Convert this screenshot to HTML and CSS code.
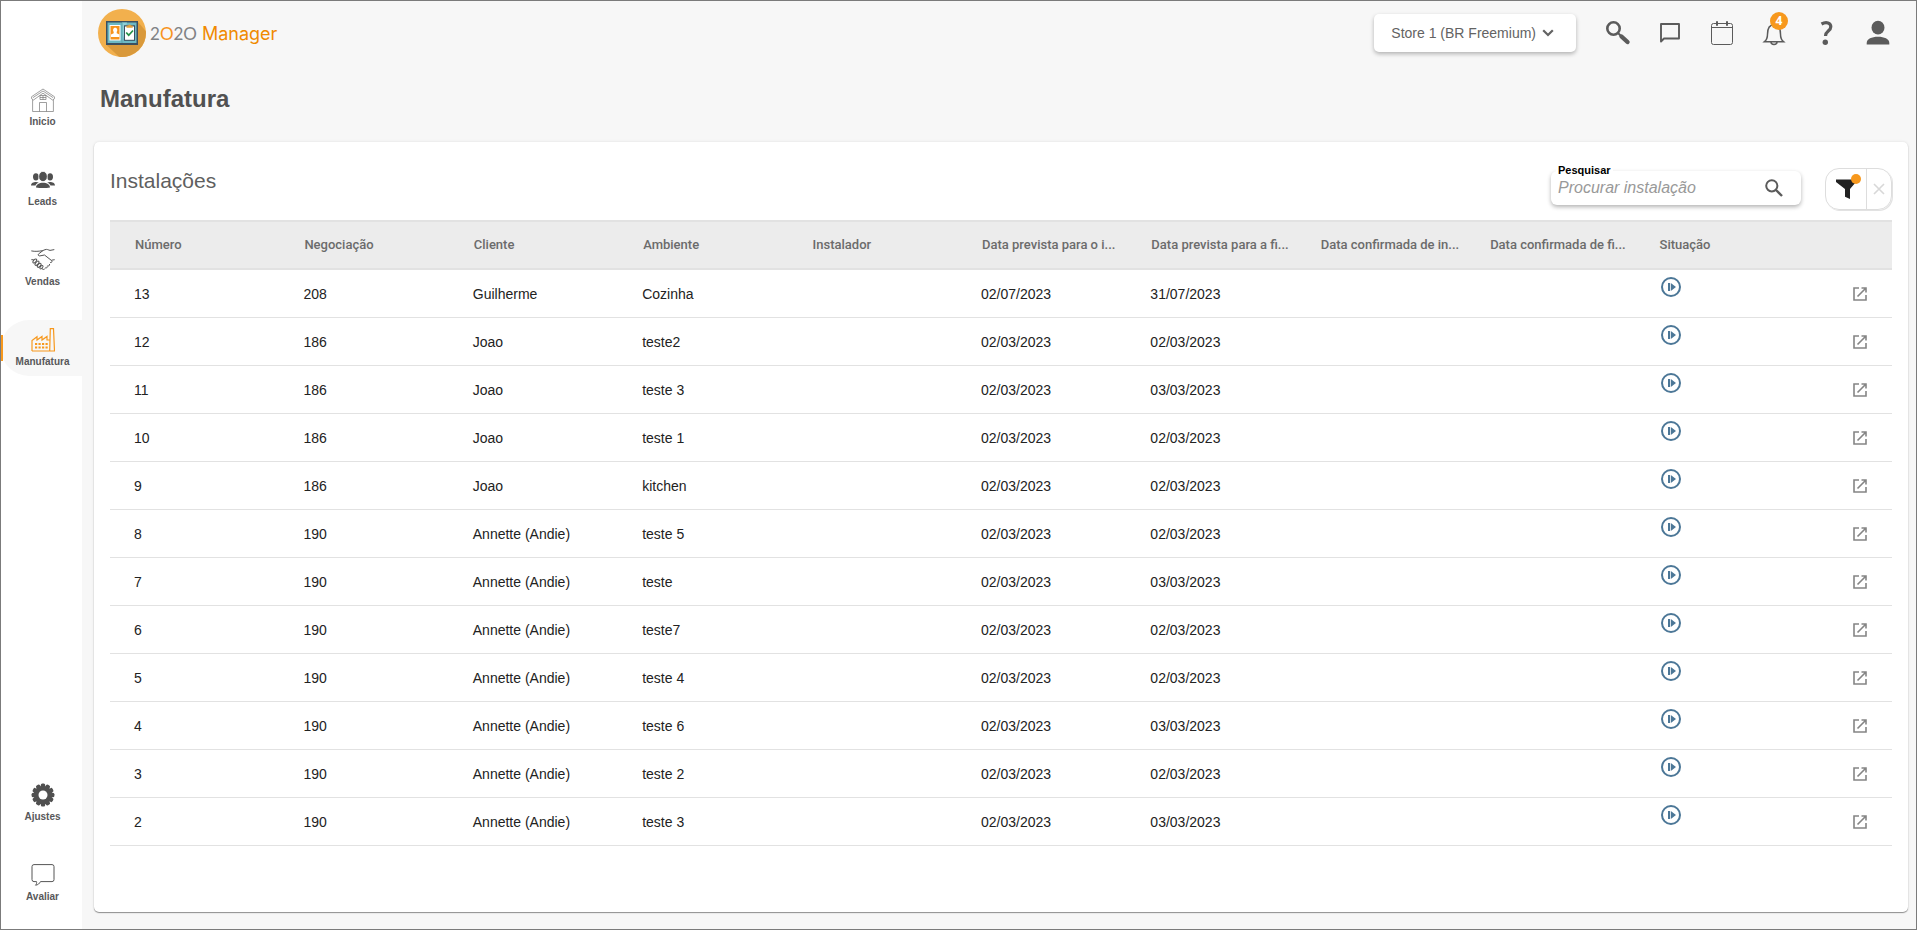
FILE: index.html
```html
<!DOCTYPE html>
<html lang="pt-BR">
<head>
<meta charset="utf-8">
<title>2020 Manager - Manufatura</title>
<link rel="stylesheet" href="styles.css">
</head>
<body>
<svg class="sprite" aria-hidden="true">
  <symbol id="play" viewBox="0 0 20 20"><circle cx="10" cy="10" r="9" fill="none" stroke="currentColor" stroke-width="2"/><path d="M7 6h2v8H7zM9.800 6l5.200 4-5.200 4z" fill="currentColor"/></symbol>
  <symbol id="open" viewBox="0 0 16 16"><path d="M7 2H2v12h12V9M9.500 2H14v4.500M14 2L5.500 10.500" fill="none" stroke="currentColor" stroke-width="1.600"/></symbol>
</svg>
<div class="app">
  <nav class="sidebar">
    <div class="nav-group">
      <a class="nav-item" href="#"><svg class="nav-icon thin" viewBox="0 0 24 24"><path d="M.6 8.700L12 1l11.400 7.700v2.100L21.500 12 12 5.200 2.500 12 .6 10.700zM1.600 11.500v12h20.800v-12M2 9.600L12 3l10 6.600M9 7.500h6v4H9zM12 7.500v4M9 9.500h6M8.500 23.500v-9h7v9"/></svg><span>Inicio</span></a>
      <a class="nav-item" href="#"><svg class="nav-icon solid" viewBox="0 0 24 24"><ellipse cx="4.900" cy="8.800" rx="2.900" ry="3.600"/><ellipse cx="19.100" cy="8.800" rx="2.900" ry="3.600"/><ellipse cx="12" cy="8.500" rx="4.300" ry="5.100" stroke="#fff" stroke-width=".7"/><path d="M0 17.500c0-2.600 2.500-3.600 5-3.600 1.200 0 2 .3 2.800.7-1.500.6-2.800 1.500-3.300 2.900zM24 17.500c0-2.600-2.500-3.600-5-3.600-1.200 0-2 .3-2.800.7 1.500.6 2.800 1.500 3.300 2.900zM5 19.500c0-3 3.200-4.700 7-4.700s7 1.700 7 4.700c-4 .7-10 .7-14 0z"/></svg><span>Leads</span></a>
      <a class="nav-item" href="#"><svg class="nav-icon line" viewBox="0 0 24 24"><path d="M.3 2.900c4 .8 7.200.4 11.200-.2l2.500-1c2-.9 3.500.4 5 .7l4.300-.8M12 2.500L7.500 6c-.8 1 .2 2.200 1.400 1.900l4.600-.9 7 5.500c1.200 1.200 0 2.500-1.300 2M23.700 11.700l-3.200.5M.3 11.700h2.400M18.500 16c.4 1.500-.7 2.400-2 1.700M16.300 18.300c.2 1.500-1 2-2 1.400M14 20.500c-.6 1.200-1.800 1.300-3 .2l-1-1"/><ellipse cx="3.800" cy="13" rx="1.300" ry="2.400" transform="rotate(42 3.800 13)"/><ellipse cx="6" cy="15.200" rx="1.300" ry="2.600" transform="rotate(42 6 15.200)"/><ellipse cx="8.200" cy="17.300" rx="1.300" ry="2.400" transform="rotate(42 8.200 17.300)"/><ellipse cx="10.400" cy="19.200" rx="1.200" ry="2" transform="rotate(42 10.400 19.200)"/></svg><span>Vendas</span></a>
      <a class="nav-item active" href="#" aria-current="page"><svg class="nav-icon" viewBox="0 0 24 24" fill="none" stroke="#f7981d" stroke-width="1.200"><path d="M1 23V12.500L6 8.800V12l5-3.500V12l5-3.500V12h2.500M1 23h22.500L22.500.7h-3.200L18.700 23"/><path d="M4 16h13M4 19.500h13" stroke-width="2" stroke-dasharray="2.200 1.300"/></svg><span>Manufatura</span></a>
    </div>
    <div class="nav-group">
      <a class="nav-item" href="#"><svg class="nav-icon solid" viewBox="0 0 24 24"><rect x="9.800" y=".6" width="4.400" height="22.800" rx="1.500"/><rect x="9.800" y=".6" width="4.400" height="22.800" rx="1.500" transform="rotate(30 12 12)"/><rect x="9.800" y=".6" width="4.400" height="22.800" rx="1.500" transform="rotate(60 12 12)"/><rect x="9.800" y=".6" width="4.400" height="22.800" rx="1.500" transform="rotate(90 12 12)"/><rect x="9.800" y=".6" width="4.400" height="22.800" rx="1.500" transform="rotate(120 12 12)"/><rect x="9.800" y=".6" width="4.400" height="22.800" rx="1.500" transform="rotate(150 12 12)"/><circle cx="12" cy="12" r="9.300"/><circle cx="12" cy="12" r="4.500" fill="#fff"/></svg><span>Ajustes</span></a>
      <a class="nav-item" href="#"><svg class="nav-icon line" viewBox="0 0 24 24"><path d="M3 1.600h18a2 2 0 0 1 2 2v13a2 2 0 0 1-2 2H9.500C8.500 20.500 7 22 4.500 22.200c1-1 1.400-2.200 1-3.600H3a2 2 0 0 1-2-2v-13a2 2 0 0 1 2-2z"/></svg><span>Avaliar</span></a>
    </div>
  </nav>
  <div class="content">
    <header class="topbar">
      <a class="logo" href="#">
        <svg class="logo-mark" viewBox="0 0 48 48"><circle cx="24" cy="24" r="24" fill="#f2b04d"/><path d="M8 35.500L21 47.800a24 24 0 0 0 26.900-25.600L40 13z" fill="#d9993b"/><path d="M8 12h32v24H8z" fill="#3c5060"/><path d="M9.500 13.500h29v20.500h-29z" fill="#6cb9c3"/><path d="M24 13.500h5L24 34z" fill="#8ed0d6"/><path d="M23.700 13.500h.7V34h-.7z" fill="#4e97a3"/><path d="M11.500 16h11v15.500h-11z" fill="#fff"/><path d="M12.500 17h9v13.500h-9z" fill="#f7941d"/><path d="M13 28v-2.500l2.700-1.300V23c-1-1.500-.8-4.200 1.500-4.200s2.500 2.700 1.500 4.200v1.200l2.700 1.300V28z" fill="#fff"/><path d="M26 16.300h11v15.500H26z" fill="#3c5060"/><path d="M27 17.500h9v13.300h-9z" fill="#fff"/><path d="M28.500 16.500h1.700a1.500 1.500 0 0 1 2.800 0h1.700v2.200h-6.200z" fill="#e3a13a"/><path d="M28.200 23.500l2.500 2.700 4.300-4.700" fill="none" stroke="#249147" stroke-width="1.700"/></svg>
        <span class="logo-year">2<b>O</b>2O</span><span class="logo-name">Manager</span>
      </a>
      <div class="tools">
        <button class="store" type="button">Store 1 (BR Freemium)<svg viewBox="0 0 12 8"><path d="M1.200 1.200L6 6l4.800-4.800" fill="none" stroke="currentColor" stroke-width="2.200"/></svg></button>
        <button class="tool" type="button" aria-label="Buscar"><svg viewBox="0 0 28 28"><circle cx="9.500" cy="9.500" r="6.200" fill="none" stroke="currentColor" stroke-width="2.600"/><path d="M14 14l2.500 2.500" stroke="currentColor" stroke-width="2"/><path d="M17.500 17.500l6 5.500" stroke="currentColor" stroke-width="4.400" stroke-linecap="round"/></svg></button>
        <button class="tool" type="button" aria-label="Mensagens"><svg viewBox="0 0 28 28"><path d="M5 5h18v14.500H8L5 22.500z" fill="none" stroke="currentColor" stroke-width="1.900" stroke-linejoin="round"/></svg></button>
        <button class="tool" type="button" aria-label="Agenda"><svg viewBox="0 0 28 28" fill="none" stroke="currentColor" stroke-width="1"><rect x="3.500" y="4.500" width="21" height="21" rx="2"/><path d="M3.500 8.500h21"/><path d="M9 2.200v4.500M19 2.200v4.500" stroke-width="2"/></svg></button>
        <button class="tool" type="button" aria-label="Notificações"><svg viewBox="0 0 28 28" fill="none" stroke="currentColor" stroke-width="1.500"><path d="M4.500 22.700c2.500-2 3-4 3-7.500 0-6 1.500-9.500 6.500-9.500s6.500 3.500 6.500 9.500c0 3.500.5 5.500 3 7.500z"/><path d="M11 23c0 3.200 6 3.200 6 0"/></svg><span class="badge">4</span></button>
        <button class="tool" type="button" aria-label="Ajuda"><svg viewBox="0 0 28 28"><path d="M9.500 5c5-2.800 9.300-1 9.300 2.700 0 4.500-5.300 4.300-5.300 9.300" fill="none" stroke="currentColor" stroke-width="3.200"/><circle cx="13.300" cy="23.300" r="2.700" fill="currentColor"/></svg></button>
        <button class="tool" type="button" aria-label="Perfil"><svg viewBox="0 0 28 28" fill="currentColor"><ellipse cx="14" cy="8.700" rx="6.500" ry="6.900"/><path d="M2.700 25.600v-1.600c0-4 5-6.200 11.300-6.200s11.300 2.200 11.300 6.200v1.600z"/></svg></button>
      </div>
    </header>
    <main class="main">
      <h1 class="page-title">Manufatura</h1>
      <section class="card">
        <div class="card-head">
          <h2 class="card-title">Instalações</h2>
          <div class="search">
            <label for="q">Pesquisar</label>
            <input id="q" type="text" placeholder="Procurar instalação">
            <button type="button" aria-label="Pesquisar"><svg viewBox="0 0 18 18" fill="none" stroke="currentColor" stroke-width="2"><circle cx="6.800" cy="6.800" r="5.600"/><path d="M11 11l6 6" stroke-width="2.400"/></svg></button>
          </div>
          <div class="filters">
            <button class="filter-open" type="button" aria-label="Filtrar"><svg viewBox="0 0 20 20"><path d="M0 .5h20v2.500l-6 7v10l-5-2.200V10L0 3z" fill="#222"/></svg><span class="dot"></span></button>
            <button class="filter-clear" type="button" aria-label="Limpar filtro"><svg viewBox="0 0 12 12"><path d="M1 1l10 10M11 1L1 11" stroke="#d8d8d8" stroke-width="1.600"/></svg></button>
          </div>
        </div>
        <table class="grid">
          <colgroup><col><col><col><col><col><col><col><col><col><col><col class="col-action"></colgroup>
          <thead><tr><th>Número</th><th>Negociação</th><th>Cliente</th><th>Ambiente</th><th>Instalador</th><th>Data prevista para o i...</th><th>Data prevista para a fi...</th><th>Data confirmada de in...</th><th>Data confirmada de fi...</th><th>Situação</th><th></th></tr></thead>
          <tbody>
            <tr><td>13</td><td>208</td><td>Guilherme</td><td>Cozinha</td><td></td><td>02/07/2023</td><td>31/07/2023</td><td></td><td></td><td class="status"><svg><use href="#play"/></svg></td><td class="action"><a href="#" aria-label="Abrir 13"><svg><use href="#open"/></svg></a></td></tr>
            <tr><td>12</td><td>186</td><td>Joao</td><td>teste2</td><td></td><td>02/03/2023</td><td>02/03/2023</td><td></td><td></td><td class="status"><svg><use href="#play"/></svg></td><td class="action"><a href="#" aria-label="Abrir 12"><svg><use href="#open"/></svg></a></td></tr>
            <tr><td>11</td><td>186</td><td>Joao</td><td>teste 3</td><td></td><td>02/03/2023</td><td>03/03/2023</td><td></td><td></td><td class="status"><svg><use href="#play"/></svg></td><td class="action"><a href="#" aria-label="Abrir 11"><svg><use href="#open"/></svg></a></td></tr>
            <tr><td>10</td><td>186</td><td>Joao</td><td>teste 1</td><td></td><td>02/03/2023</td><td>02/03/2023</td><td></td><td></td><td class="status"><svg><use href="#play"/></svg></td><td class="action"><a href="#" aria-label="Abrir 10"><svg><use href="#open"/></svg></a></td></tr>
            <tr><td>9</td><td>186</td><td>Joao</td><td>kitchen</td><td></td><td>02/03/2023</td><td>02/03/2023</td><td></td><td></td><td class="status"><svg><use href="#play"/></svg></td><td class="action"><a href="#" aria-label="Abrir 9"><svg><use href="#open"/></svg></a></td></tr>
            <tr><td>8</td><td>190</td><td>Annette (Andie)</td><td>teste 5</td><td></td><td>02/03/2023</td><td>02/03/2023</td><td></td><td></td><td class="status"><svg><use href="#play"/></svg></td><td class="action"><a href="#" aria-label="Abrir 8"><svg><use href="#open"/></svg></a></td></tr>
            <tr><td>7</td><td>190</td><td>Annette (Andie)</td><td>teste</td><td></td><td>02/03/2023</td><td>03/03/2023</td><td></td><td></td><td class="status"><svg><use href="#play"/></svg></td><td class="action"><a href="#" aria-label="Abrir 7"><svg><use href="#open"/></svg></a></td></tr>
            <tr><td>6</td><td>190</td><td>Annette (Andie)</td><td>teste7</td><td></td><td>02/03/2023</td><td>02/03/2023</td><td></td><td></td><td class="status"><svg><use href="#play"/></svg></td><td class="action"><a href="#" aria-label="Abrir 6"><svg><use href="#open"/></svg></a></td></tr>
            <tr><td>5</td><td>190</td><td>Annette (Andie)</td><td>teste 4</td><td></td><td>02/03/2023</td><td>02/03/2023</td><td></td><td></td><td class="status"><svg><use href="#play"/></svg></td><td class="action"><a href="#" aria-label="Abrir 5"><svg><use href="#open"/></svg></a></td></tr>
            <tr><td>4</td><td>190</td><td>Annette (Andie)</td><td>teste 6</td><td></td><td>02/03/2023</td><td>03/03/2023</td><td></td><td></td><td class="status"><svg><use href="#play"/></svg></td><td class="action"><a href="#" aria-label="Abrir 4"><svg><use href="#open"/></svg></a></td></tr>
            <tr><td>3</td><td>190</td><td>Annette (Andie)</td><td>teste 2</td><td></td><td>02/03/2023</td><td>02/03/2023</td><td></td><td></td><td class="status"><svg><use href="#play"/></svg></td><td class="action"><a href="#" aria-label="Abrir 3"><svg><use href="#open"/></svg></a></td></tr>
            <tr><td>2</td><td>190</td><td>Annette (Andie)</td><td>teste 3</td><td></td><td>02/03/2023</td><td>03/03/2023</td><td></td><td></td><td class="status"><svg><use href="#play"/></svg></td><td class="action"><a href="#" aria-label="Abrir 2"><svg><use href="#open"/></svg></a></td></tr>
          </tbody>
        </table>
      </section>
    </main>
  </div>
</div>
</body>
</html>
```

FILE: styles.css
```css
* { box-sizing: border-box; }
body { margin: 0; font-family: "Liberation Sans", Arial, sans-serif; color: #222; background: #f7f7f7; }
button { border: 0; background: none; padding: 0; font: inherit; color: inherit; cursor: pointer; }
a { color: inherit; text-decoration: none; }
svg { display: block; }
.sprite { position: absolute; width: 0; height: 0; }

.app { display: flex; min-height: 100vh; border: 1px solid #7b7b7b; }

.sidebar { width: 81px; flex: none; background: #fff; display: flex; flex-direction: column; justify-content: space-between; padding: 79px 0 18px; }
.nav-group { display: flex; flex-direction: column; gap: 24px; }
.nav-item { position: relative; height: 56px; display: flex; flex-direction: column; align-items: center; padding: 8px 0 0 2px; gap: 4px; font-size: 10px; line-height: 12px; font-weight: bold; color: #58585a; }
.nav-icon { width: 24px; height: 24px; }
.nav-icon.thin { fill: none; stroke: #777; stroke-width: 0.7; }
.nav-icon.line { fill: none; stroke: #555; stroke-width: 1; }
.nav-icon.solid { fill: #505050; }
.nav-item.active { background: #f7f7f7; border-radius: 28px 0 0 28px; }
.nav-item.active::before { content: ""; position: absolute; left: 0; top: 15px; width: 2px; height: 26px; background: #f7981d; }

.content { flex: 1; min-width: 0; display: flex; flex-direction: column; }
.topbar { display: flex; justify-content: space-between; align-items: center; height: 64px; padding: 0 24px 0 16px; }
.logo { display: flex; align-items: center; }
.logo-mark { width: 48px; height: 48px; margin-right: 4px; }
.logo-year { font-family: Lato, sans-serif; font-size: 17px; color: #808285; margin-right: 5px; }
.logo-year b { font-weight: normal; color: #f7941d; }
.logo-name { font-family: Inter, sans-serif; font-weight: 400; font-size: 18px; color: #f08a00; }
.tools { display: flex; align-items: center; gap: 24px; color: #5b5b5b; }
.store { display: flex; align-items: center; gap: 6px; height: 38px; padding: 0 22px 0 17px; margin-right: 4px; border-radius: 5px; background: #fff; box-shadow: 0 2px 4px rgba(0, 0, 0, 0.28); font-size: 14px; color: #636363; }
.store svg { width: 12px; height: 8px; }
.tool { position: relative; width: 28px; height: 28px; }
.tool svg { width: 28px; height: 28px; }
.badge { position: absolute; left: 10px; top: -7px; width: 18px; height: 18px; border-radius: 50%; background: #f7981d; color: #fff; font: bold 12px/18px "Open Sans", sans-serif; text-align: center; }

.main { flex: 1; display: flex; flex-direction: column; padding: 20px 8px 17px 12px; }
.page-title { margin: 0 0 29px 6px; font-size: 24px; line-height: 28px; color: #515151; }
.card { flex: 1; background: #fff; border-radius: 5px; padding: 26px 16px 24px; box-shadow: 0 1px 1px rgba(0, 0, 0, 0.4), 0 0 3px rgba(0, 0, 0, 0.1); }
.card-head { display: flex; align-items: flex-start; padding-bottom: 10px; }
.card-title { flex: 1; margin: 1px 0 0; font-size: 21px; line-height: 24px; font-weight: normal; color: #5f5f5f; }
.search { position: relative; display: flex; align-items: center; width: 250px; height: 34px; margin: 3px 24px 0 0; padding-right: 18px; border-radius: 6px; box-shadow: 0 2px 4px rgba(0, 0, 0, 0.3); background: #fff; }
.search label { position: absolute; left: 5px; top: -7px; padding: 0 2px; background: #fff; font-size: 11px; line-height: 12px; font-weight: bold; color: #000; }
.search input { flex: 1; min-width: 0; height: 32px; border: 0; padding: 0 0 0 7px; background: none; font: italic 16px/20px "Liberation Sans", Arial, sans-serif; color: #333; outline: 0; }
.search input::placeholder { color: #999; opacity: 1; }
.search button { color: #5b5b5b; }
.search svg { width: 18px; height: 18px; }
.filters { display: flex; width: 67px; height: 42px; border: 1px solid #ddd; border-radius: 14px; box-shadow: 1px 1px 0 #e2e2e2; }
.filter-open { position: relative; width: 41px; display: flex; align-items: center; justify-content: center; border-right: 1px solid #ddd; }
.filter-open svg { width: 20px; height: 20px; }
.dot { position: absolute; right: 5px; top: 5px; width: 10px; height: 10px; border-radius: 50%; background: #f7981d; }
.filter-clear { flex: 1; display: flex; align-items: center; justify-content: center; }
.filter-clear svg { width: 12px; height: 12px; }

.grid { width: 100%; table-layout: fixed; border-collapse: separate; border-spacing: 0; }
.col-action { width: 88px; }
.grid th { height: 50px; padding: 0 0 0 25px; border: solid #e2e2e2; border-width: 2px 0; background: #ececec; text-align: left; font: 500 13px/18px Roboto, sans-serif; color: #6b6b6b; white-space: nowrap; }
.grid td { height: 48px; padding: 0 0 0 24px; border-bottom: 1px solid #e2e2e2; font-size: 14px; line-height: 18px; }
.grid .status { vertical-align: top; padding-top: 7px; padding-left: 26px; color: #4c7797; }
.status svg { width: 20px; height: 20px; }
.grid .action { padding-left: 48px; color: #858585; }
.action svg { width: 16px; height: 16px; }
```
